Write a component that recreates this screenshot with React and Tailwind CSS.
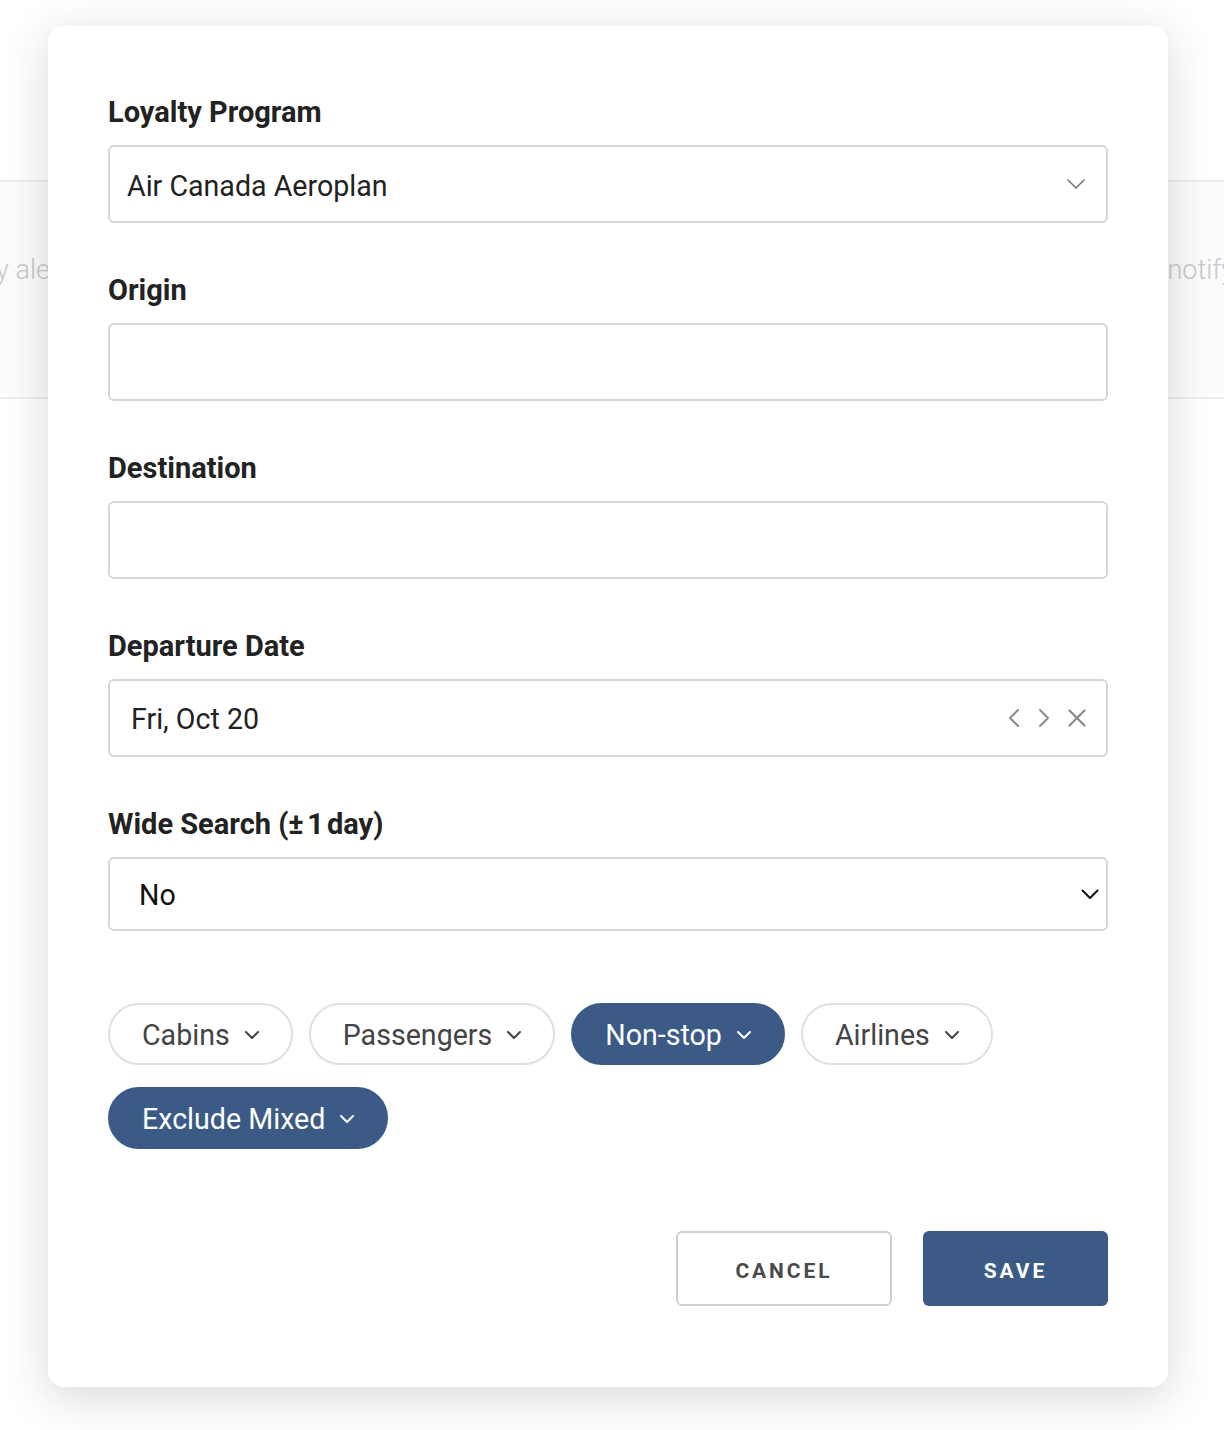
import React from "react";

const font = { fontFamily: "Roboto, 'Noto Sans', Arial, sans-serif" };

const Chevron = ({ className = "" }) => (
  <svg width="14" height="8" viewBox="0 0 14 8" fill="none" className={className}>
    <path d="M1 1l6 6 6-6" stroke="currentColor" strokeWidth="2" strokeLinecap="round" strokeLinejoin="round" />
  </svg>
);

const Pill = ({ label, active }) => (
  <button
    className={`flex items-center gap-[15px] h-[62px] pl-[32px] pr-[32px] pt-[2px] rounded-full border-2 text-[28.6px] leading-[34px] ${
      active ? "bg-[#3b5b86] border-[#3b5b86] text-white" : "bg-white border-[#e0e0e0] text-[#444]"
    }`}
  >
    <span>{label}</span>
    <Chevron />
  </button>
);

const Field = ({ label, first, children }) => (
  <div className={first ? "" : "mt-[50px]"}>
    <label className="block text-[29px] leading-[34px] font-bold text-[#222] mb-4">{label}</label>
    {children}
  </div>
);

export default function App() {
  return (
    <div style={font} className="relative h-[1430px] w-full overflow-hidden bg-white">
      {/* page behind the modal */}
      <div className="mt-[180px] h-[219px] border-y-2 border-[#eeeeee] bg-[#fcfcfc] flex items-start justify-between pt-[71px] text-[27px] leading-[34px] text-[#c8c8c8] font-light">
        <span className="-ml-[10px]">ly alert</span>
        <span className="mr-[-10px]">notify</span>
      </div>

      {/* modal */}
      <div className="absolute left-[48px] top-[26px] w-[1120px] rounded-2xl bg-white shadow-[0_10px_45px_rgba(40,40,60,0.18)] px-[60px] pt-[69px] pb-[81px]">
        <Field label="Loyalty Program" first>
          <div className="flex items-center justify-between h-[78px] rounded-md border-2 border-[#d6d6d6] pl-[17px] pr-[21px]">
            <span className="pt-[5px] text-[28.6px] text-[#222]">Air Canada Aeroplan</span>
            <svg width="18" height="10" viewBox="0 0 18 10" fill="none" className="text-[#777]">
              <path d="M1 1l8 8 8-8" stroke="currentColor" strokeWidth="1.6" strokeLinecap="round" strokeLinejoin="round" />
            </svg>
          </div>
        </Field>

        <Field label="Origin">
          <div className="h-[78px] rounded-md border-2 border-[#d6d6d6]" />
        </Field>

        <Field label="Destination">
          <div className="h-[78px] rounded-md border-2 border-[#d6d6d6]" />
        </Field>

        <Field label="Departure Date">
          <div className="flex items-center justify-between h-[78px] rounded-md border-2 border-[#d6d6d6] pl-[21px] pr-[20px]">
            <span className="pt-[3px] text-[28.6px] text-[#222]">Fri, Oct 20</span>
            <div className="flex items-center gap-[18px] text-[#8a8a8a]">
              <svg width="12" height="18" viewBox="0 0 12 18" fill="none">
                <path d="M10 1L2 9l8 8" stroke="currentColor" strokeWidth="2" strokeLinecap="round" strokeLinejoin="round" />
              </svg>
              <svg width="12" height="18" viewBox="0 0 12 18" fill="none">
                <path d="M2 1l8 8-8 8" stroke="currentColor" strokeWidth="2" strokeLinecap="round" strokeLinejoin="round" />
              </svg>
              <svg width="18" height="18" viewBox="0 0 18 18" fill="none">
                <path d="M1.5 1.5l15 15M16.5 1.5l-15 15" stroke="currentColor" strokeWidth="2.2" strokeLinecap="round" />
              </svg>
            </div>
          </div>
        </Field>

        <Field
          label={
            <>
              Wide Search <span className="[word-spacing:-4px]">(± 1 day)</span>
            </>
          }
        >
          <div className="flex items-center justify-between h-[74px] rounded-md border-2 border-[#d6d6d6] pl-[29px] pr-[7px]">
            <span className="pt-[3px] text-[28.6px] text-[#111]">No</span>
            <svg width="18" height="11" viewBox="0 0 18 11" fill="none" className="text-[#111]">
              <path d="M1.5 1.5l7.5 7.5 7.5-7.5" stroke="currentColor" strokeWidth="2" strokeLinecap="round" strokeLinejoin="round" />
            </svg>
          </div>
        </Field>

        <div className="mt-[72px] flex flex-wrap gap-x-[16px] gap-y-[22px]">
          <Pill label="Cabins" />
          <Pill label="Passengers" />
          <Pill label="Non-stop" active />
          <Pill label="Airlines" />
          <Pill label="Exclude Mixed" active />
        </div>

        <div className="mt-[82px] flex justify-end gap-[31px]">
          <button className="w-[216px] h-[75px] pt-[6px] rounded-md border-2 border-[#d0d0d0] bg-white text-[21px] font-bold tracking-[0.14em] text-[#4a4a4a]">
            CANCEL
          </button>
          <button className="w-[185px] h-[75px] pt-[6px] rounded-md bg-[#3b5b86] text-[21px] font-bold tracking-[0.14em] text-white">
            SAVE
          </button>
        </div>
      </div>
    </div>
  );
}
